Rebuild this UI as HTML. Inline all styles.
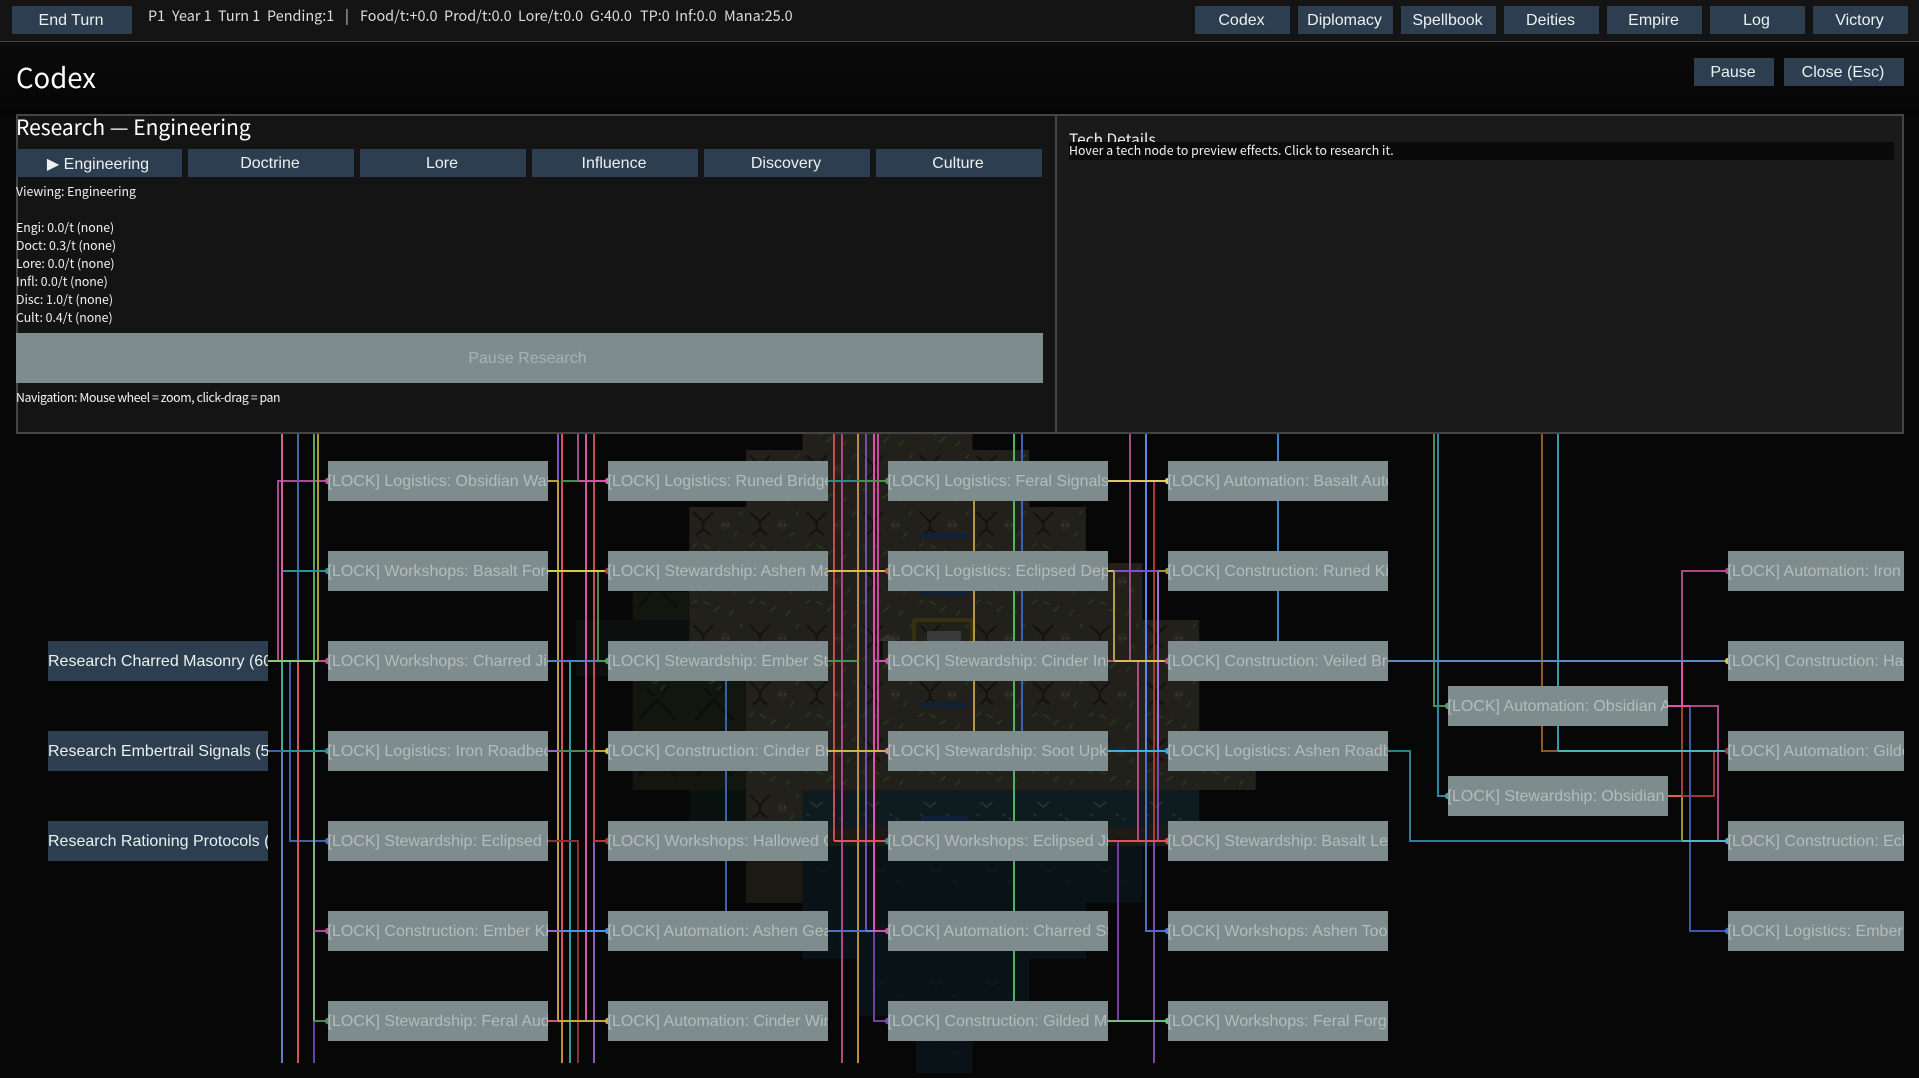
<!DOCTYPE html>
<html><head><meta charset="utf-8"><title>Codex</title>
<style>
*{box-sizing:border-box;margin:0;padding:0}
html,body{width:1919px;height:1078px;overflow:hidden;background:#070707}
body{position:relative;font-family:"Liberation Sans",sans-serif;color:#fff}
.a{position:absolute;white-space:nowrap}
.btn{position:absolute;background:#2c3e50;color:#ecf0f1;font:16px/30px "Liberation Sans",sans-serif;text-align:center;height:28px;white-space:nowrap;padding-right:2px}
.tab{line-height:29px}
.n{position:absolute;width:220px;height:40px;overflow:hidden;white-space:pre;background:#7f8c8d;color:#b4bbbc;font:16px/41px "Liberation Sans",sans-serif;text-indent:-.5px}
.r{background:#2c3e50;color:#ecf0f1;text-indent:0}
.s{font:12.3px/18px "Noto Sans CJK JP","Liberation Sans",sans-serif;color:#f2f2f2}
.t{font:14.4px/18px "Noto Sans CJK JP","Liberation Sans",sans-serif;color:#dcdcdc;top:7px}
svg{position:absolute;left:0;top:0}
svg path{fill:none;stroke-width:2}
</style></head><body>

<svg width="1919" height="1078" viewBox="0 0 1919 1078">
<defs>
<pattern id="land" patternUnits="userSpaceOnUse" x="689.33" y="507" width="56.65" height="56.55">
<rect width="57" height="57" fill="#21201a"/>
<path d="M4 5L14 15M24 5L14 15V22L7 28M14 22L21 28" stroke="#12110d" style="stroke-width:2"/>
<circle cx="36" cy="18" r="5" fill="#272620"/>
<circle cx="34" cy="18" r="1.1" fill="#3e3d34"/><circle cx="39" cy="18" r="1.1" fill="#3e3d34"/>
<path d="M3 40L8 36M24 48L30 43M44 30L48 25M40 52L44 47M14 38L20 41M50 8L53 4" stroke="#263c1f" style="stroke-width:1.5"/>
</pattern>
<pattern id="forest" patternUnits="userSpaceOnUse" x="632.7" y="676" width="56.65" height="56.55">
<rect width="57" height="57" fill="#13150f"/>
<path d="M6 44L24 24L44 44M14 12L22 20M36 10L30 18" stroke="#0e0f0b" style="stroke-width:3"/>
<path d="M20 8L26 4M28 14L32 10" stroke="#1b321a" style="stroke-width:2"/>
</pattern>
<pattern id="water" patternUnits="userSpaceOnUse" x="802.6" y="846" width="56.65" height="56.55">
<rect width="57" height="57" fill="#091317"/>
<path d="M14 22L20 26L26 22M36 36L42 38" stroke="#0e191e" style="stroke-width:1.5"/>
</pattern>
<pattern id="coast" patternUnits="userSpaceOnUse" x="802.6" y="790" width="56.65" height="56">
<rect width="57" height="40" fill="#0e1b1f"/>
<rect y="38" width="57" height="18" fill="#1d1a15"/>
<path d="M8 12L14 17L20 12M30 24L33 26M36 28L39 30M4 24L7 26" stroke="#2a3231" style="stroke-width:1.5"/>
<path d="M0 40Q14 30 28 40T57 40" stroke="#231c15" style="stroke-width:2"/>
</pattern>
</defs>

<!-- map -->
<g fill="url(#land)">
<rect x="802.6" y="434" width="169.9" height="16"/>
<rect x="746" y="450" width="283.2" height="57"/>
<rect x="689.3" y="507" width="396.6" height="56.5"/>
<rect x="689.3" y="563" width="453.2" height="57"/>
<rect x="689.3" y="620" width="509.9" height="56.5"/>
<rect x="746" y="676" width="453.2" height="57"/>
<rect x="746" y="733" width="509.8" height="57"/>
<rect x="746" y="790" width="56.6" height="56"/>
</g>
<g fill="url(#forest)">
<rect x="632.7" y="592" width="56.6" height="28"/>
<rect x="632.7" y="676" width="113.3" height="114"/>
</g>
<rect x="576" y="620" width="113.3" height="56.5" fill="#0b0f0d"/>
<rect x="689.3" y="790" width="56.7" height="56" fill="#0a1210"/>
<rect x="746" y="846" width="56.6" height="57" fill="#1a1914"/>
<rect x="802.6" y="790" width="396.6" height="56" fill="url(#coast)"/>
<g fill="url(#water)">
<rect x="802.6" y="846" width="339.9" height="57"/>
<rect x="802.6" y="903" width="283.3" height="56"/>
<rect x="859.3" y="959" width="169.9" height="57"/>
<rect x="916" y="1016" width="56.6" height="57"/>
</g>
<g fill="#10203a">
<rect x="921" y="533" width="47" height="5"/><rect x="921" y="590" width="47" height="5"/>
<rect x="921" y="702" width="47" height="5"/><rect x="921" y="816" width="47" height="5"/>
</g>
<path d="M914 641V620H972V641" stroke="#38320f" style="stroke-width:3.5"/>
<rect x="927" y="631" width="34" height="10" fill="#3a3a3a"/>
<path d="M878 641L888 634L898 641Z" style="fill:#33332e;stroke:none"/>
<rect x="880" y="641" width="3" height="18" fill="#0e0e0b"/>

<!-- vertical links through node columns -->
<path stroke="#b09a38" d="M974 481V751"/>
<path stroke="#52b064" d="M1014 434V1021"/>
<path stroke="#4060b0" d="M1022 434V751"/>
<path stroke="#3a60a8" d="M726 661V931"/>
<path stroke="#4080d0" d="M1278 434V661"/>

<!-- gap 1 -->
<path stroke="#b0478c" d="M278 661V481H328"/>
<path stroke="#d8609a" d="M282 434V661"/>
<path stroke="#40a8a0" d="M282 661V751"/>
<path stroke="#5a80c8" d="M282 751V1063"/>
<path stroke="#3c62a8" d="M290 661V841H328"/>
<path stroke="#3f66aa" d="M298 434V661"/>
<path stroke="#d85058" d="M298 661V1063"/>
<path stroke="#5aa060" d="M314 434V661"/>
<path stroke="#78b880" d="M314 661V1021"/>
<path stroke="#6a40a8" d="M314 1021V1063"/>
<path stroke="#b09a38" d="M318 434V661"/>
<path stroke="#2f8c98" d="M283 571H328"/>
<path stroke="#80d070" d="M268 661H318"/>
<path stroke="#c84a9a" d="M318 661H328"/>
<path stroke="#3c62a8" d="M268 751H282"/>
<path stroke="#2f8c98" d="M282 751H328"/>
<path stroke="#b04090" d="M314 931H328"/>
<path stroke="#4a8a5a" d="M314 1021H328"/>

<!-- gap 2 -->
<path stroke="#7a50d0" d="M558 434V481"/>
<path stroke="#b8a040" d="M548 481H558V1021"/>
<path stroke="#d85060" d="M562 434V1021"/>
<path stroke="#c88838" d="M562 1021V1063"/>
<path stroke="#3098a8" d="M570 661V1063"/>
<path stroke="#a04a90" d="M578 434V481"/>
<path stroke="#8a3030" d="M548 841H578V1063"/>
<path stroke="#d850a8" d="M586 434V1021"/>
<path stroke="#c05050" d="M594 434V841"/>
<path stroke="#9058c0" d="M594 841V1063"/>
<path stroke="#4a8a50" d="M598 571V661"/>
<path stroke="#3a9050" d="M562 481H578"/>
<path stroke="#d850a0" d="M578 481H608"/>
<path stroke="#d8c850" d="M548 571H608"/>
<path stroke="#5080c8" d="M548 661H598"/>
<path stroke="#4a9a60" d="M598 661H608"/>
<path stroke="#a060d0" d="M548 751H558"/>
<path stroke="#4a8a50" d="M558 751H594"/>
<path stroke="#c0a040" d="M594 751H608"/>
<path stroke="#b03838" d="M594 841H608"/>
<path stroke="#a060d0" d="M548 931H562"/>
<path stroke="#5090e0" d="M562 931H608"/>
<path stroke="#e05060" d="M548 1021H558"/>
<path stroke="#c8a840" d="M558 1021H608"/>

<!-- gap 3 -->
<path stroke="#c05050" d="M834 434V841"/>
<path stroke="#b04888" d="M842 434V1063"/>
<path stroke="#c08a40" d="M858 434V1063"/>
<path stroke="#7050b0" d="M866 434V931"/>
<path stroke="#e050b0" d="M874 434V931"/>
<path stroke="#7040a8" d="M874 931V1021H888"/>
<path stroke="#c84aa0" d="M878 434V751"/>
<path stroke="#2a8a80" d="M828 481H858"/>
<path stroke="#4a9050" d="M858 481H888"/>
<path stroke="#e0b850" d="M828 571H888"/>
<path stroke="#4a9050" d="M828 661H858"/>
<path stroke="#d050b0" d="M874 661H888"/>
<path stroke="#d0b050" d="M828 751H888"/>
<path stroke="#e05060" d="M834 841H888"/>
<path stroke="#4a70c0" d="M828 931H866"/>
<path stroke="#6a80e0" d="M866 931H874"/>
<path stroke="#d850b0" d="M874 931H888"/>

<!-- gap 4 -->
<path stroke="#b0a040" d="M1114 571V661"/>
<path stroke="#a84888" d="M1130 434V661"/>
<path stroke="#b04888" d="M1138 661V841"/>
<path stroke="#5888e8" d="M1146 434V751"/>
<path stroke="#4a70c0" d="M1146 751V931H1168"/>
<path stroke="#a83830" d="M1154 481V841"/>
<path stroke="#7a48b0" d="M1154 841V1063"/>
<path stroke="#a070e0" d="M1158 571V751"/>
<path stroke="#7a48b0" d="M1158 751V841"/>
<path stroke="#703fa0" d="M1118 841V1021"/>
<path stroke="#e0c860" d="M1108 481H1168"/>
<path stroke="#e0b850" d="M1108 571H1114"/>
<path stroke="#8050c0" d="M1114 571H1158"/>
<path stroke="#a09040" d="M1158 571H1168"/>
<path stroke="#c05090" d="M1108 661H1114"/>
<path stroke="#e0b850" d="M1114 661H1168"/>
<path stroke="#40b0e0" d="M1108 751H1168"/>
<path stroke="#e05060" d="M1108 841H1168"/>
<path stroke="#70c080" d="M1108 1021H1168"/>

<!-- gap 5 / 6 -->
<path stroke="#4a9050" d="M1434 434V706H1448"/>
<path stroke="#3088a0" d="M1438 434V796H1448"/>
<path stroke="#8a5a28" d="M1542 434V751H1558"/>
<path stroke="#3a98a8" d="M1558 434V751"/>
<path stroke="#a84888" d="M1682 661V571H1728"/>
<path stroke="#e050b0" d="M1682 661V706"/>
<path stroke="#a04030" d="M1682 706V796"/>
<path stroke="#a09030" d="M1682 796V841"/>
<path stroke="#a03830" d="M1682 796H1714V751"/>
<path stroke="#3a5aa8" d="M1690 706V931H1728"/>
<path stroke="#a84888" d="M1690 706H1718V841"/>
<path stroke="#e050b0" d="M1668 706H1690"/>
<path stroke="#e06050" d="M1668 796H1682"/>
<path stroke="#5a8ac8" d="M1388 661H1728"/>
<path stroke="#2a8090" d="M1388 751H1410V841H1682"/>
<path stroke="#50b8c0" d="M1682 841H1728"/>
<path stroke="#50b0c0" d="M1558 751H1728"/>

<!-- dots -->
<g stroke="none">
<circle cx="328" cy="481" r="3.2" fill="#d050a0"/><circle cx="328" cy="571" r="3.2" fill="#3090a8"/><circle cx="328" cy="661" r="3.2" fill="#c84a9a"/><circle cx="328" cy="751" r="3.2" fill="#3090a8"/><circle cx="328" cy="841" r="3.2" fill="#4070c8"/><circle cx="328" cy="931" r="3.2" fill="#c04a98"/><circle cx="328" cy="1021" r="3.2" fill="#4a9060"/>
<circle cx="608" cy="481" r="3.2" fill="#e060b0"/><circle cx="608" cy="571" r="3.2" fill="#b04040"/><circle cx="608" cy="661" r="3.2" fill="#50a070"/><circle cx="608" cy="751" r="3.2" fill="#d8c050"/><circle cx="608" cy="841" r="3.2" fill="#b03838"/><circle cx="608" cy="931" r="3.2" fill="#5088e0"/><circle cx="608" cy="1021" r="3.2" fill="#c8a848"/>
<circle cx="888" cy="481" r="3.2" fill="#4a9a50"/><circle cx="888" cy="571" r="3.2" fill="#c05040"/><circle cx="888" cy="661" r="3.2" fill="#d050a8"/><circle cx="888" cy="751" r="3.2" fill="#e080a0"/><circle cx="888" cy="841" r="3.2" fill="#3090a0"/><circle cx="888" cy="931" r="3.2" fill="#d050b0"/><circle cx="888" cy="1021" r="3.2" fill="#7a48b8"/>
<circle cx="1168" cy="481" r="3.2" fill="#e0d060"/><circle cx="1168" cy="571" r="3.2" fill="#a89840"/><circle cx="1168" cy="661" r="3.2" fill="#c05090"/><circle cx="1168" cy="751" r="3.2" fill="#40a0e0"/><circle cx="1168" cy="841" r="3.2" fill="#e05060"/><circle cx="1168" cy="931" r="3.2" fill="#4a80d8"/><circle cx="1168" cy="1021" r="3.2" fill="#70c080"/>
<circle cx="1448" cy="706" r="3.2" fill="#50a060"/><circle cx="1448" cy="796" r="3.2" fill="#40a0b0"/>
<circle cx="1728" cy="571" r="3.2" fill="#b04890"/><circle cx="1728" cy="661" r="3.2" fill="#d8c050"/><circle cx="1728" cy="751" r="3.2" fill="#a04040"/><circle cx="1728" cy="841" r="3.2" fill="#50b0d0"/><circle cx="1728" cy="931" r="3.2" fill="#4070d0"/>
</g>
</svg>

<!-- nodes -->
<div class="n r" style="left:48px;top:641px">Research Charred Masonry (60 Research)</div>
<div class="n r" style="left:48px;top:731px">Research Embertrail Signals (50 Research)</div>
<div class="n r" style="left:48px;top:821px">Research Rationing Protocols (40 Research)</div>

<div class="n" style="left:328px;top:461px">[LOCK] Logistics: Obsidian Watch</div>
<div class="n" style="left:328px;top:551px">[LOCK] Workshops: Basalt Forge</div>
<div class="n" style="left:328px;top:641px">[LOCK] Workshops: Charred Jigs</div>
<div class="n" style="left:328px;top:731px">[LOCK] Logistics: Iron Roadbeds</div>
<div class="n" style="left:328px;top:821px">[LOCK] Stewardship: Eclipsed Ledger</div>
<div class="n" style="left:328px;top:911px">[LOCK] Construction: Ember Kilns</div>
<div class="n" style="left:328px;top:1001px">[LOCK] Stewardship: Feral Audit</div>

<div class="n" style="left:608px;top:461px">[LOCK] Logistics: Runed Bridges</div>
<div class="n" style="left:608px;top:551px">[LOCK] Stewardship: Ashen Manor</div>
<div class="n" style="left:608px;top:641px">[LOCK] Stewardship: Ember Stores</div>
<div class="n" style="left:608px;top:731px">[LOCK] Construction: Cinder Bricks</div>
<div class="n" style="left:608px;top:821px">[LOCK] Workshops: Hallowed Gears</div>
<div class="n" style="left:608px;top:911px">[LOCK] Automation: Ashen Gears</div>
<div class="n" style="left:608px;top:1001px">[LOCK] Automation: Cinder Winch</div>

<div class="n" style="left:888px;top:461px">[LOCK] Logistics: Feral Signals</div>
<div class="n" style="left:888px;top:551px">[LOCK] Logistics: Eclipsed Depot</div>
<div class="n" style="left:888px;top:641px">[LOCK] Stewardship: Cinder Inns</div>
<div class="n" style="left:888px;top:731px">[LOCK] Stewardship: Soot Upkeep</div>
<div class="n" style="left:888px;top:821px">[LOCK] Workshops: Eclipsed Jigs</div>
<div class="n" style="left:888px;top:911px">[LOCK] Automation: Charred Steam</div>
<div class="n" style="left:888px;top:1001px">[LOCK] Construction: Gilded Mortar</div>

<div class="n" style="left:1168px;top:461px">[LOCK] Automation: Basalt Autos</div>
<div class="n" style="left:1168px;top:551px">[LOCK] Construction: Runed Kilns</div>
<div class="n" style="left:1168px;top:641px">[LOCK] Construction: Veiled Bricks</div>
<div class="n" style="left:1168px;top:731px">[LOCK] Logistics: Ashen Roadbeds</div>
<div class="n" style="left:1168px;top:821px">[LOCK] Stewardship: Basalt Ledger</div>
<div class="n" style="left:1168px;top:911px">[LOCK] Workshops: Ashen Tools</div>
<div class="n" style="left:1168px;top:1001px">[LOCK] Workshops: Feral Forge</div>

<div class="n" style="left:1448px;top:686px">[LOCK] Automation: Obsidian Arms</div>
<div class="n" style="left:1448px;top:776px">[LOCK] Stewardship: Obsidian Ledger</div>

<div class="n" style="left:1728px;top:551px;width:176px">[LOCK] Automation: Iron Arms</div>
<div class="n" style="left:1728px;top:641px;width:176px">[LOCK] Construction: Hallowed</div>
<div class="n" style="left:1728px;top:731px;width:176px">[LOCK] Automation: Gilded Gears</div>
<div class="n" style="left:1728px;top:821px;width:176px">[LOCK] Construction: Eclipsed</div>
<div class="n" style="left:1728px;top:911px;width:176px">[LOCK] Logistics: Ember Roads</div>

<!-- header region -->
<div class="a" style="left:0;top:42px;width:1919px;height:72px;background:linear-gradient(#0b0b0b,#050505)"></div>
<div class="a" style="left:0;top:0;width:1919px;height:42px;background:#141414;border-bottom:1px solid #444"></div>
<div class="btn" style="left:12px;top:6px;width:120px">End Turn</div>
<div class="a t" style="left:148px">P1</div>
<div class="a t" style="left:172px">Year 1</div>
<div class="a t" style="left:218px">Turn 1</div>
<div class="a t" style="left:267px">Pending:1</div>
<div class="a t" style="left:345px">|</div>
<div class="a t" style="left:360px">Food/t:+0.0</div>
<div class="a t" style="left:444px">Prod/t:0.0</div>
<div class="a t" style="left:518px">Lore/t:0.0</div>
<div class="a t" style="left:590px">G:40.0</div>
<div class="a t" style="left:640px">TP:0</div>
<div class="a t" style="left:675px">Inf:0.0</div>
<div class="a t" style="left:724px">Mana:25.0</div>

<div class="btn" style="left:1195px;top:6px;width:95px">Codex</div>
<div class="btn" style="left:1298px;top:6px;width:95px">Diplomacy</div>
<div class="btn" style="left:1401px;top:6px;width:95px">Spellbook</div>
<div class="btn" style="left:1504px;top:6px;width:95px">Deities</div>
<div class="btn" style="left:1607px;top:6px;width:95px">Empire</div>
<div class="btn" style="left:1710px;top:6px;width:95px">Log</div>
<div class="btn" style="left:1813px;top:6px;width:95px">Victory</div>

<div class="a" style="left:16px;top:56px;font:27.5px/40px 'Noto Sans CJK JP','Liberation Sans',sans-serif;color:#fff">Codex</div>
<div class="btn" style="left:1694px;top:58px;width:80px">Pause</div>
<div class="btn" style="left:1784px;top:58px;width:120px">Close (Esc)</div>

<!-- panel -->
<div class="a" style="left:16px;top:114px;width:1888px;height:320px;border:2px solid #444;background:#141414"></div>
<div class="a" style="left:1055px;top:114px;width:849px;height:320px;border:2px solid #444;background:#1a1a1a"></div>

<div class="a" style="left:16px;top:113px;font:21px/28px 'Noto Sans CJK JP','Liberation Sans',sans-serif;color:#fff">Research — Engineering</div>
<div class="btn tab" style="left:16px;top:149px;width:166px"><span style="font-family:'DejaVu Sans',sans-serif">▶</span> Engineering</div>
<div class="btn tab" style="left:188px;top:149px;width:166px">Doctrine</div>
<div class="btn tab" style="left:360px;top:149px;width:166px">Lore</div>
<div class="btn tab" style="left:532px;top:149px;width:166px">Influence</div>
<div class="btn tab" style="left:704px;top:149px;width:166px">Discovery</div>
<div class="btn tab" style="left:876px;top:149px;width:166px">Culture</div>

<div class="a s" style="left:16px;top:182px">Viewing: Engineering</div>
<div class="a s" style="left:16px;top:218px">Engi: 0.0/t (none)</div>
<div class="a s" style="left:16px;top:236px">Doct: 0.3/t (none)</div>
<div class="a s" style="left:16px;top:254px">Lore: 0.0/t (none)</div>
<div class="a s" style="left:16px;top:272px">Infl: 0.0/t (none)</div>
<div class="a s" style="left:16px;top:290px">Disc: 1.0/t (none)</div>
<div class="a s" style="left:16px;top:308px">Cult: 0.4/t (none)</div>

<div class="a" style="left:16px;top:333px;width:1027px;height:50px;background:#7f8c8d;color:#a9b1b2;font:16px/51px 'Liberation Sans',sans-serif;text-align:center;padding-right:4px">Pause Research</div>
<div class="a s" style="left:16px;top:388px;letter-spacing:-.4px">Navigation: Mouse wheel = zoom, click-drag = pan</div>

<div class="a" style="left:1069px;top:128px;height:14px;overflow:hidden;font:15.5px/22px 'Noto Sans CJK JP','Liberation Sans',sans-serif;color:#f0f0f0">Tech Details</div>
<div class="a" style="left:1069px;top:142px;width:825px;height:18px;background:#0a0a0a"></div>
<div class="a s" style="left:1069px;top:141px;letter-spacing:.04px">Hover a tech node to preview effects. Click to research it.</div>

</body></html>
